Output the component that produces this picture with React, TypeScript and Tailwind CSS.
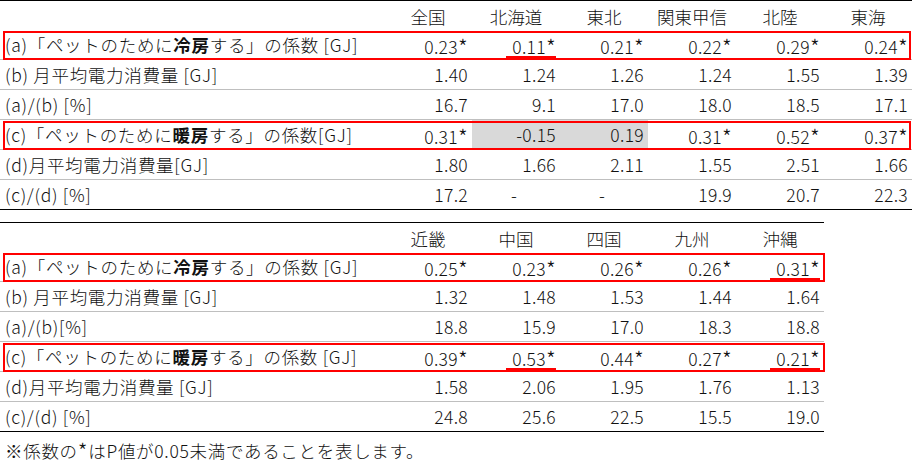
import type { ReactNode } from "react";

type Cell = {
  v: string;
  mark?: boolean; // red underline
  gray?: boolean; // gray fill
  center?: boolean;
};

type Row = {
  label: ReactNode;
  cells: Cell[];
  boxed?: boolean;
  last?: boolean;
};

const c = (v: string, o: Partial<Cell> = {}): Cell => ({ v, ...o });

const coolLabel = (gap: string) => (
  <>
    (a)「ペットのために<b className="font-bold">冷房</b>する」の係数{gap}[GJ]
  </>
);
const heatLabel = (gap: string) => (
  <>
    (c)「ペットのために<b className="font-bold">暖房</b>する」の係数{gap}[GJ]
  </>
);

// the original font has a bigger asterisk
const Star = () => <span className="relative top-[2px] text-[22px] leading-none">*</span>;

const topHead = ["全国", "北海道", "東北", "関東甲信", "北陸", "東海"];
const topRows: Row[] = [
  {
    label: coolLabel(" "),
    boxed: true,
    cells: [c("0.23*"), c("0.11*", { mark: true }), c("0.21*"), c("0.22*"), c("0.29*"), c("0.24*")],
  },
  {
    label: "(b) 月平均電力消費量 [GJ]",
    cells: [c("1.40"), c("1.24"), c("1.26"), c("1.24"), c("1.55"), c("1.39")],
  },
  {
    label: "(a)/(b) [%]",
    cells: [c("16.7"), c("9.1"), c("17.0"), c("18.0"), c("18.5"), c("17.1")],
  },
  {
    label: heatLabel(""),
    boxed: true,
    cells: [c("0.31*"), c("-0.15", { gray: true }), c("0.19", { gray: true }), c("0.31*"), c("0.52*"), c("0.37*")],
  },
  {
    label: "(d)月平均電力消費量[GJ]",
    cells: [c("1.80"), c("1.66"), c("2.11"), c("1.55"), c("2.51"), c("1.66")],
  },
  {
    label: "(c)/(d) [%]",
    last: true,
    cells: [c("17.2"), c("-", { center: true }), c("-", { center: true }), c("19.9"), c("20.7"), c("22.3")],
  },
];

const bottomHead = ["近畿", "中国", "四国", "九州", "沖縄"];
const bottomRows: Row[] = [
  {
    label: coolLabel(" "),
    boxed: true,
    cells: [c("0.25*"), c("0.23*"), c("0.26*"), c("0.26*"), c("0.31*", { mark: true })],
  },
  {
    label: "(b) 月平均電力消費量 [GJ]",
    cells: [c("1.32"), c("1.48"), c("1.53"), c("1.44"), c("1.64")],
  },
  {
    label: "(a)/(b)[%]",
    cells: [c("18.8"), c("15.9"), c("17.0"), c("18.3"), c("18.8")],
  },
  {
    label: heatLabel(" "),
    boxed: true,
    cells: [c("0.39*"), c("0.53*", { mark: true }), c("0.44*"), c("0.27*"), c("0.21*", { mark: true })],
  },
  {
    label: "(d)月平均電力消費量 [GJ]",
    cells: [c("1.58"), c("2.06"), c("1.95"), c("1.76"), c("1.13")],
  },
  {
    label: "(c)/(d) [%]",
    last: true,
    cells: [c("24.8"), c("25.6"), c("22.5"), c("15.5"), c("19.0")],
  },
];

function ValueCell({ cell }: { cell: Cell }) {
  const star = cell.v.endsWith("*");
  const num = star ? cell.v.slice(0, -1) : cell.v;
  return (
    <div
      className={`flex items-center pr-1 ${cell.center ? "justify-center" : "justify-end"} ${
        cell.gray ? "bg-[#d9d9d9]" : ""
      }`}
    >
      <span className="relative tracking-[0.3px]">
        {num}
        {star && <Star />}
        {cell.mark && (
          <span className="absolute left-[-6px] right-0 bottom-[-3px] h-[3px] bg-[#ff0000]" />
        )}
      </span>
    </div>
  );
}

function Table({
  head,
  rows,
  grid,
  boxRight,
}: {
  head: string[];
  rows: Row[];
  grid: string;
  boxRight: string;
}) {
  return (
    <div className="border-t border-black">
      {/* Header */}
      <div className={`grid ${grid} h-[29px]`}>
        <div />
        {head.map((h) => (
          <div key={h} className="flex items-center justify-center pt-[2px]">
            {h}
          </div>
        ))}
      </div>
      {/* Body */}
      {rows.map((row, i) => (
        <div
          key={i}
          className={`relative grid ${grid} h-[30px] border-b ${
            row.last ? "border-black" : "border-[#bfbfbf]"
          }`}
        >
          <div className="flex items-center pl-[5px] whitespace-nowrap tracking-[0.7px]">
            {row.label}
          </div>
          {row.cells.map((cell, j) => (
            <ValueCell key={j} cell={cell} />
          ))}
          {row.boxed && (
            <div
              className={`pointer-events-none absolute left-[3px] top-[1px] bottom-[-1px] border-2 border-[#ff0000] ${boxRight}`}
            />
          )}
        </div>
      ))}
    </div>
  );
}

export default function App() {
  return (
    <div
      className="w-[914px] h-[464px] bg-white text-[17.5px] font-light leading-none text-[#111] overflow-hidden"
      style={{ fontFamily: '"Noto Sans CJK JP", "Noto Sans", sans-serif' }}
    >
      <div className="w-[912px]">
        <Table
          head={topHead}
          rows={topRows}
          grid="grid-cols-[384px_repeat(6,88px)]"
          boxRight="right-[1px]"
        />
      </div>
      <div className="w-[824px] mt-[12px]">
        <Table
          head={bottomHead}
          rows={bottomRows}
          grid="grid-cols-[384px_repeat(5,88px)]"
          boxRight="right-[-1px]"
        />
        <div className="h-[32px] flex items-center pl-[5px] tracking-[0.7px]">
          <p>
            ※係数の<Star />はP値が0.05未満であることを表します。
          </p>
        </div>
      </div>
    </div>
  );
}
